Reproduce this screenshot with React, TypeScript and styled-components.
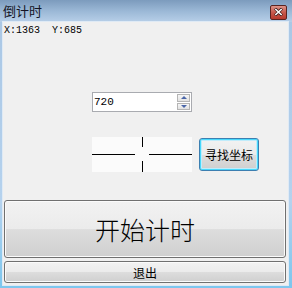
import React from "react";
import styled, { createGlobalStyle } from "styled-components";

const Global = createGlobalStyle`
  html, body { margin: 0; padding: 0; background: #ffffff; }
  body { font-family: "Noto Sans CJK SC", "Liberation Sans", sans-serif; }
`;

const Window = styled.div`
  width: 292px;
  height: 288px;
  display: flex;
  flex-direction: column;
  background: linear-gradient(to bottom, #a9c6e4 0%, #b5d2ee 70%, #7cc6ee 100%);
  box-sizing: border-box;
`;

const TitleBar = styled.div`
  height: 22px;
  flex: 0 0 22px;
  display: flex;
  align-items: center;
  justify-content: space-between;
  padding: 0 5px 0 3px;
  background: linear-gradient(to bottom, #7c9bbd 0%, #9bb8d6 50%, #b7cfe8 100%);
`;

const Title = styled.span`
  font-family: "Noto Sans CJK SC", sans-serif;
  font-size: 13px;
  line-height: 16px;
  color: #141424;
  margin-top: -1px;
`;

const CloseButton = styled.div`
  width: 15px;
  height: 13px;
  border: 1px solid #5a2420;
  border-radius: 2px;
  background: linear-gradient(to bottom, #dc9388 0%, #c8594c 50%, #b8392c 100%);
  display: flex;
  align-items: center;
  justify-content: center;
  margin-top: 2px;
`;

const Client = styled.div`
  flex: 1;
  margin: 0 4px 3px 3px;
  padding: 2px 2px 2px 1px;
  background: #f0f0f0;
  box-shadow: 0 0 0 1px #dfeaf5;
  display: flex;
  flex-direction: column;
`;

const Coords = styled.div`
  margin-top: 1px;
  font-family: "Liberation Mono", monospace;
  font-size: 10px;
  line-height: 12px;
  color: #000;
  white-space: pre;
  height: 12px;
`;

const SpinBox = styled.div`
  margin: 55px 0 0 88px;
  width: 98px;
  height: 18px;
  border: 1px solid #a9abb0;
  background: #fff;
  display: flex;
  align-items: center;
  justify-content: space-between;
`;

const SpinText = styled.span`
  font-family: "Liberation Mono", monospace;
  font-size: 11px;
  color: #000;
  padding-left: 1px;
`;

const SpinButtons = styled.div`
  width: 13px;
  height: 16px;
  margin-right: 1px;
  display: flex;
  flex-direction: column;
  gap: 1px;
`;

const SpinHalf = styled.div`
  flex: 1;
  border: 1px solid #b5b5b5;
  background: linear-gradient(to bottom, #f6f6f6, #e2e2e2);
  display: flex;
  align-items: center;
  justify-content: center;
`;

const Arrow = styled.div<{ $up?: boolean }>`
  width: 0;
  height: 0;
  border-left: 3px solid transparent;
  border-right: 3px solid transparent;
  ${(p) => (p.$up ? "border-bottom: 3px solid #4a66a8;" : "border-top: 3px solid #4a66a8;")}
`;

const FinderRow = styled.div`
  margin: 25px 0 0 88px;
  display: flex;
  align-items: flex-start;
  gap: 7px;
`;

const Crosshair = styled.div`
  width: 100px;
  height: 35px;
  background: #fbfbfb;
  display: flex;
`;

const BaseButton = styled.div`
  box-sizing: border-box;
  border: 1px solid #707070;
  border-radius: 3px;
  background: linear-gradient(to bottom, #f2f2f2 0%, #ebebeb 50%, #dddddd 51%, #cfcfcf 100%);
  box-shadow: inset 0 0 0 1px #fbfbfb;
  display: flex;
  align-items: center;
  justify-content: center;
  color: #000;
  font-family: "Noto Sans CJK SC", sans-serif;
`;

const FindButton = styled(BaseButton)`
  margin-top: 1px;
  width: 60px;
  height: 33px;
  border-color: #3c7fb1;
  box-shadow: inset 0 0 0 1px #48d8fb, inset 0 0 0 2px #c0ecfb;
  font-size: 12px;
`;

const Spacer = styled.div`
  flex: 1;
`;

const StartButton = styled(BaseButton)`
  height: 58px;
  font-size: 25px;
  font-weight: 300;
`;

const ExitButton = styled(BaseButton)`
  margin-top: 3px;
  height: 22px;
  font-size: 12px;
`;

export default function App() {
  return (
    <>
      <Global />
      <Window>
        <TitleBar>
          <Title>倒计时</Title>
          <CloseButton>
            <svg width="9" height="8" viewBox="0 0 9 8">
              <path d="M1 0.5 L8 7.5 M8 0.5 L1 7.5" stroke="#3a1a18" strokeWidth="3" />
              <path d="M1.3 1 L7.7 7 M7.7 1 L1.3 7" stroke="#ffffff" strokeWidth="1.6" />
            </svg>
          </CloseButton>
        </TitleBar>
        <Client>
          <Coords>{"X:1363  Y:685"}</Coords>
          <SpinBox>
            <SpinText>720</SpinText>
            <SpinButtons>
              <SpinHalf>
                <Arrow $up />
              </SpinHalf>
              <SpinHalf>
                <Arrow />
              </SpinHalf>
            </SpinButtons>
          </SpinBox>
          <FinderRow>
            <Crosshair>
              <svg width="100" height="35" viewBox="0 0 100 35">
                <path
                  d="M0 17.5 H43 M57 17.5 H100 M50.5 0 V10 M50.5 24 V35"
                  stroke="#000"
                  strokeWidth="1"
                />
              </svg>
            </Crosshair>
            <FindButton>寻找坐标</FindButton>
          </FinderRow>
          <Spacer />
          <StartButton>开始计时</StartButton>
          <ExitButton>退出</ExitButton>
        </Client>
      </Window>
    </>
  );
}
